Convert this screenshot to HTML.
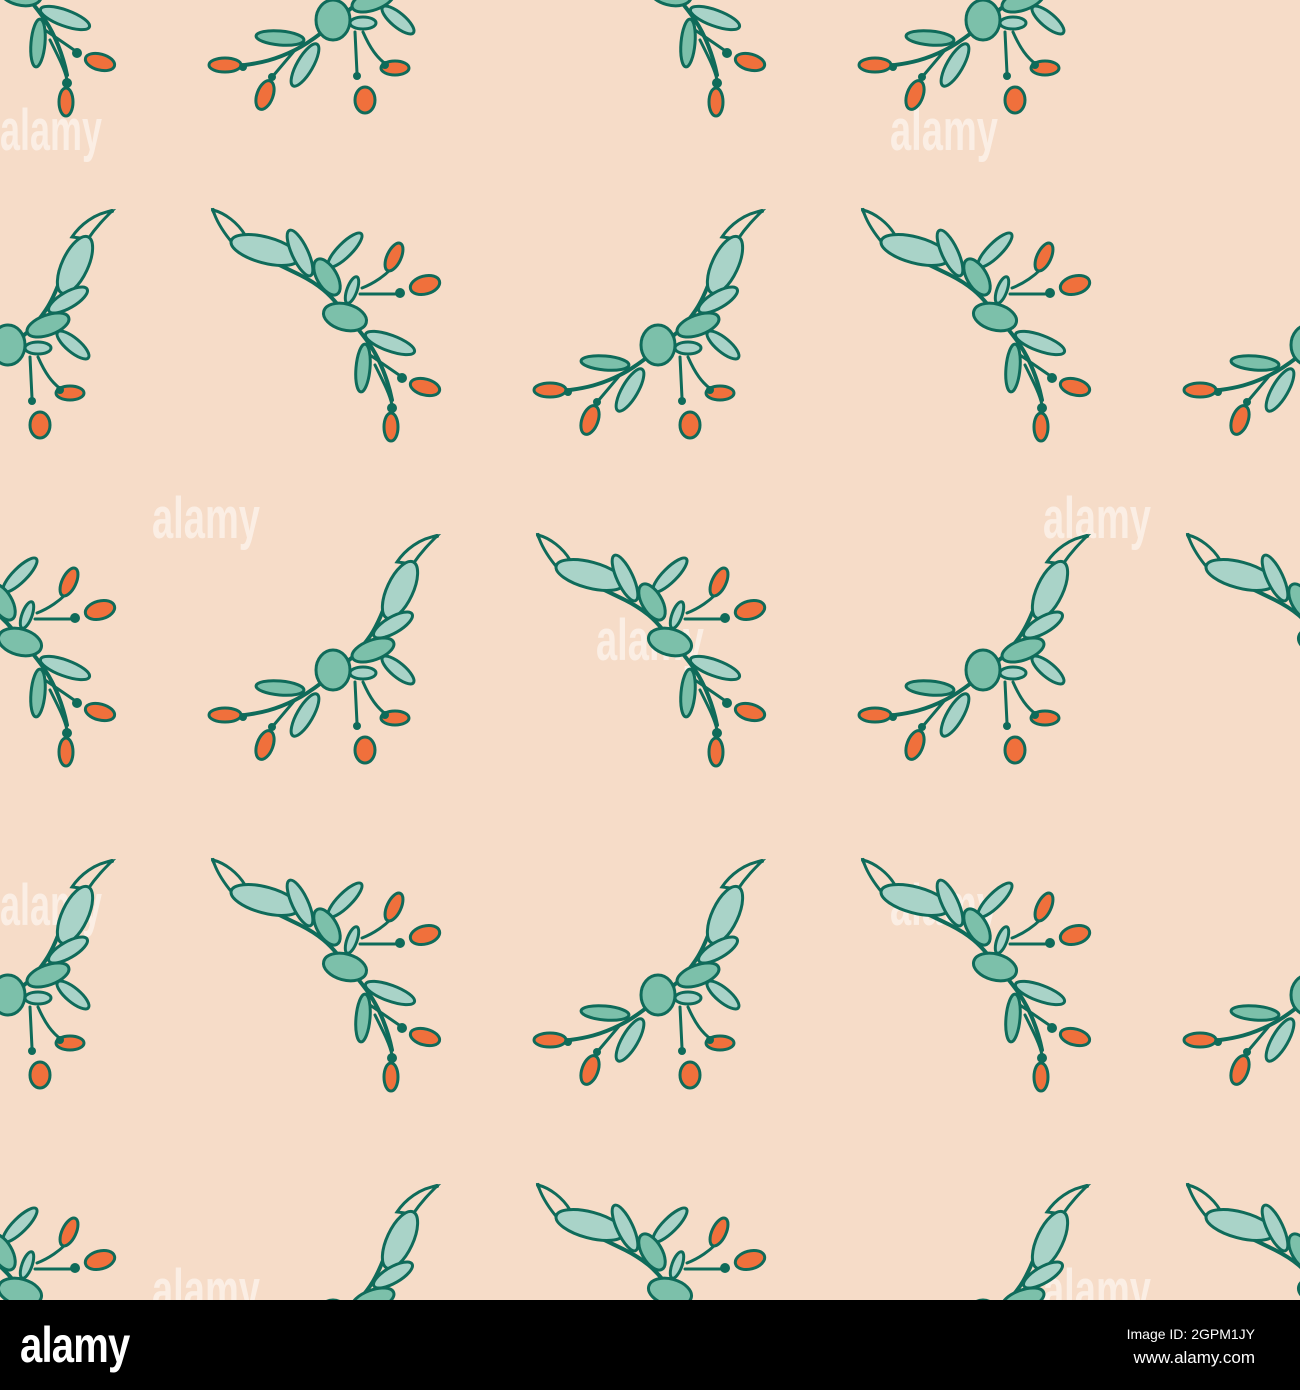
<!DOCTYPE html>
<html><head><meta charset="utf-8"><style>
html,body{margin:0;padding:0;background:#f6dcc8;}
body{width:1300px;height:1390px;position:relative;overflow:hidden;font-family:"Liberation Sans",sans-serif;}
svg.pat{position:absolute;left:0;top:0;}
.footer{position:absolute;left:0;top:1300px;width:1300px;height:90px;background:#000;}
.logo{position:absolute;left:20px;top:16px;color:#fff;font-family:"Liberation Sans Narrow","Liberation Sans",sans-serif;font-weight:bold;font-size:50px;letter-spacing:-1px;transform:scaleX(0.8);transform-origin:left;}
.id{position:absolute;right:45px;top:26px;color:#fff;font-size:14px;font-family:"Liberation Sans Narrow","Liberation Sans",sans-serif;}
.www{position:absolute;right:45px;top:48px;color:#fff;font-size:17px;font-family:"Liberation Sans Narrow","Liberation Sans",sans-serif;}
</style></head><body>
<svg class="pat" width="1300" height="1300" viewBox="0 0 1300 1300" xmlns="http://www.w3.org/2000/svg">
<defs>
<symbol id="m" viewBox="0 0 240 240" overflow="visible">
<g stroke="#0f6b5a" stroke-width="3" stroke-linecap="round" fill="none">
<path d="M232,6 C215,10 195,30 182,70 C172,98 165,108 150,125 C130,142 110,160 90,170 C70,180 55,183 40,185" stroke-width="4"/>
<path d="M90,170 L68,196"/>
<path d="M150,152 L152,193"/>
<path d="M158,152 C165,168 172,178 182,185"/>
</g>
<g stroke="#0f6b5a" stroke-width="3">
<path d="M232,6 C215,8 200,20 192,32 L208,34 C216,22 225,13 232,6 Z" fill="#f6dcc8"/>
<ellipse cx="195" cy="60" rx="13" ry="31" transform="rotate(25 195 60)" fill="#a9d3c8"/>
<ellipse cx="188" cy="95" rx="22" ry="8" transform="rotate(-30 188 95)" fill="#a9d3c8"/>
<ellipse cx="168" cy="120" rx="22" ry="10" transform="rotate(-20 168 120)" fill="#7cc0aa"/>
<ellipse cx="193" cy="140" rx="20" ry="7" transform="rotate(40 193 140)" fill="#a9d3c8"/>
<ellipse cx="128" cy="140" rx="17" ry="20" fill="#7cc0aa"/>
<ellipse cx="158" cy="143" rx="13" ry="6" fill="#a9d3c8"/>
<ellipse cx="75" cy="158" rx="24" ry="7" transform="rotate(5 75 158)" fill="#7cc0aa"/>
<ellipse cx="100" cy="185" rx="8" ry="24" transform="rotate(30 100 185)" fill="#a9d3c8"/>
<ellipse cx="20" cy="185" rx="16" ry="7" fill="#f0703c"/>
<ellipse cx="60" cy="215" rx="8" ry="15" transform="rotate(20 60 215)" fill="#f0703c"/>
<ellipse cx="160" cy="220" rx="10" ry="13" fill="#f0703c"/>
<ellipse cx="190" cy="188" rx="14" ry="7" fill="#f0703c"/>
</g>
<g fill="#0f6b5a"><circle cx="38" cy="187" r="4"/><circle cx="67" cy="197" r="4"/><circle cx="152" cy="196" r="4"/><circle cx="180" cy="185" r="4"/></g>
</symbol>
<symbol id="b" viewBox="0 0 240 240" overflow="visible">
<g stroke="#0f6b5a" stroke-width="3" stroke-linecap="round" fill="none">
<path d="M3,5 C20,40 60,55 90,70 C110,80 120,90 128,100 C140,115 150,125 160,140 C170,155 178,175 182,195" stroke-width="4"/>
<path d="M152,83 C165,78 175,70 180,65"/>
<path d="M150,89 L188,89"/>
<path d="M160,150 L192,172"/>
<path d="M165,160 C175,180 180,190 182,200"/>
</g>
<g stroke="#0f6b5a" stroke-width="3">
<path d="M3,5 C15,8 28,18 35,30 L20,35 C12,25 6,15 3,5 Z" fill="#f6dcc8"/>
<ellipse cx="55" cy="45" rx="35" ry="13" transform="rotate(15 55 45)" fill="#a9d3c8"/>
<ellipse cx="90" cy="48" rx="8" ry="25" transform="rotate(-25 90 48)" fill="#a9d3c8"/>
<ellipse cx="135" cy="45" rx="7" ry="23" transform="rotate(45 135 45)" fill="#a9d3c8"/>
<ellipse cx="117" cy="72" rx="10" ry="20" transform="rotate(-30 117 72)" fill="#7cc0aa"/>
<ellipse cx="142" cy="85" rx="5" ry="14" transform="rotate(20 142 85)" fill="#a9d3c8"/>
<ellipse cx="135" cy="112" rx="22" ry="13" transform="rotate(15 135 112)" fill="#7cc0aa"/>
<ellipse cx="180" cy="138" rx="26" ry="8" transform="rotate(20 180 138)" fill="#a9d3c8"/>
<ellipse cx="153" cy="163" rx="7" ry="24" transform="rotate(5 153 163)" fill="#7cc0aa"/>
<ellipse cx="184" cy="52" rx="7" ry="15" transform="rotate(25 184 52)" fill="#f0703c"/>
<ellipse cx="215" cy="80" rx="15" ry="9" transform="rotate(-15 215 80)" fill="#f0703c"/>
<ellipse cx="215" cy="182" rx="15" ry="8" transform="rotate(15 215 182)" fill="#f0703c"/>
<ellipse cx="181" cy="222" rx="7" ry="14" fill="#f0703c"/>
</g>
<g fill="#0f6b5a"><circle cx="190" cy="88" r="5"/><circle cx="192" cy="173" r="5"/><circle cx="182" cy="203" r="5"/></g>
</symbol>
</defs>
<g fill="#fbeee4" font-family="Liberation Sans Narrow, Liberation Sans, sans-serif" font-weight="bold" font-size="58">
<text x="0" y="150" textLength="102" lengthAdjust="spacingAndGlyphs">alamy</text>
<text x="890" y="150" textLength="108" lengthAdjust="spacingAndGlyphs">alamy</text>
<text x="152" y="538" textLength="108" lengthAdjust="spacingAndGlyphs">alamy</text>
<text x="1043" y="538" textLength="108" lengthAdjust="spacingAndGlyphs">alamy</text>
<text x="596" y="660" textLength="108" lengthAdjust="spacingAndGlyphs">alamy</text>
<text x="0" y="925" textLength="102" lengthAdjust="spacingAndGlyphs">alamy</text>
<text x="890" y="925" textLength="108" lengthAdjust="spacingAndGlyphs">alamy</text>
<text x="152" y="1310" textLength="108" lengthAdjust="spacingAndGlyphs">alamy</text>
<text x="1043" y="1310" textLength="108" lengthAdjust="spacingAndGlyphs">alamy</text>
</g>
<use href="#m" x="205" y="-120" width="240" height="240"/>
<use href="#m" x="855" y="-120" width="240" height="240"/>
<use href="#m" x="-120" y="205" width="240" height="240"/>
<use href="#m" x="530" y="205" width="240" height="240"/>
<use href="#m" x="1180" y="205" width="240" height="240"/>
<use href="#m" x="205" y="530" width="240" height="240"/>
<use href="#m" x="855" y="530" width="240" height="240"/>
<use href="#m" x="-120" y="855" width="240" height="240"/>
<use href="#m" x="530" y="855" width="240" height="240"/>
<use href="#m" x="1180" y="855" width="240" height="240"/>
<use href="#m" x="205" y="1180" width="240" height="240"/>
<use href="#m" x="855" y="1180" width="240" height="240"/>
<use href="#b" x="-115" y="-120" width="240" height="240"/>
<use href="#b" x="535" y="-120" width="240" height="240"/>
<use href="#b" x="1185" y="-120" width="240" height="240"/>
<use href="#b" x="210" y="205" width="240" height="240"/>
<use href="#b" x="860" y="205" width="240" height="240"/>
<use href="#b" x="-115" y="530" width="240" height="240"/>
<use href="#b" x="535" y="530" width="240" height="240"/>
<use href="#b" x="1185" y="530" width="240" height="240"/>
<use href="#b" x="210" y="855" width="240" height="240"/>
<use href="#b" x="860" y="855" width="240" height="240"/>
<use href="#b" x="-115" y="1180" width="240" height="240"/>
<use href="#b" x="535" y="1180" width="240" height="240"/>
<use href="#b" x="1185" y="1180" width="240" height="240"/>
</svg>
<div class="footer">
<div class="logo">alamy</div>
<div class="id">Image ID: 2GPM1JY</div>
<div class="www">www.alamy.com</div>
</div>
</body></html>
